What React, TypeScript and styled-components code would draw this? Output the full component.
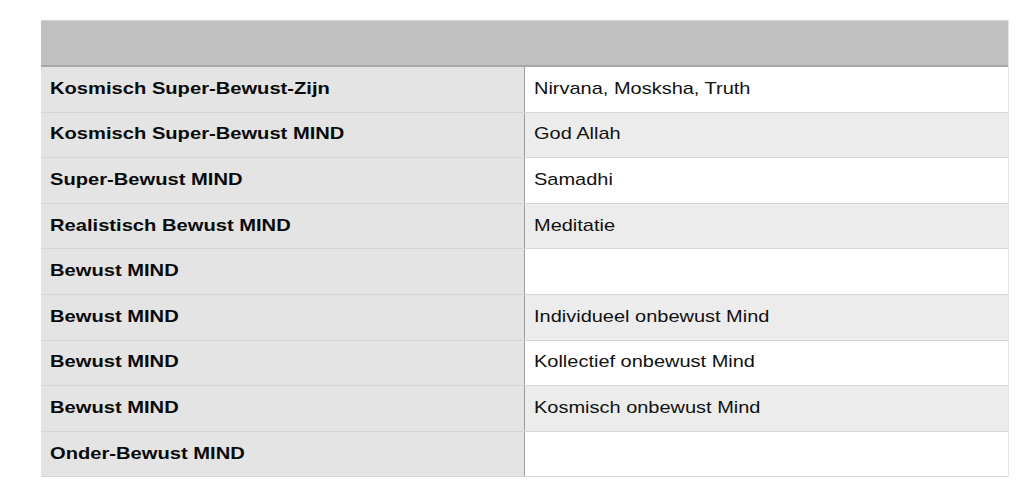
import React from "react";
import styled, { createGlobalStyle } from "styled-components";

const GlobalStyle = createGlobalStyle`
  html, body {
    margin: 0;
    padding: 0;
    background: #ffffff;
  }

  body {
    font-family: "Liberation Sans", Arial, Helvetica, sans-serif;
    color: #111111;
  }
`;

const Page = styled.div`
  padding: 20px 0 0 41px;
`;

const Sheet = styled.div`
  width: 968px;
  display: flex;
  flex-direction: column;
  border-right: 1px solid #e4e4e4;
  box-sizing: border-box;
`;

const HeaderBar = styled.div`
  height: 47px;
  background: #bfc0bf;
  border-top: 1px solid #d6d6d6;
  border-bottom: 2px solid #a6a7a6;
  box-sizing: border-box;
`;

const Row = styled.div`
  display: grid;
  grid-template-columns: 484px 1fr;
  height: 45.6px;
  box-sizing: border-box;
  border-bottom: 1px solid #d6d6d6;
`;

const LabelCell = styled.div`
  display: flex;
  align-items: center;
  padding: 0 0 1px 9px;
  background: #e3e4e3;
  border-right: 1px solid #9c9c9c;
  font-weight: 700;
  font-size: 17px;
  color: #0a0a0a;
`;

const ValueCell = styled.div<{ $shaded: boolean }>`
  display: flex;
  align-items: center;
  padding: 0 0 1px 9px;
  background: ${({ $shaded }) => ($shaded ? "#ececec" : "#ffffff")};
  font-size: 17px;
  color: #111111;
`;

// the source type is set a little wider than Arial, so stretch it
const Text = styled.span<{ $stretch: number }>`
  display: inline-block;
  white-space: nowrap;
  transform: scaleX(${({ $stretch }) => $stretch});
  transform-origin: left center;
`;

const rows: [string, string][] = [
  ["Kosmisch Super-Bewust-Zijn", "Nirvana, Mosksha, Truth"],
  ["Kosmisch Super-Bewust MIND", "God Allah"],
  ["Super-Bewust MIND", "Samadhi"],
  ["Realistisch Bewust MIND", "Meditatie"],
  ["Bewust MIND", ""],
  ["Bewust MIND", "Individueel onbewust Mind"],
  ["Bewust MIND", "Kollectief onbewust Mind"],
  ["Bewust MIND", "Kosmisch onbewust Mind"],
  ["Onder-Bewust MIND", ""],
];

function App() {
  return (
    <>
      <GlobalStyle />
      <Page>
        <Sheet>
          <HeaderBar />
          {rows.map(([label, value], i) => (
            <Row key={i}>
              <LabelCell>
                <Text $stretch={1.185}>{label}</Text>
              </LabelCell>
              <ValueCell $shaded={i % 2 === 1}>
                {value && <Text $stretch={1.175}>{value}</Text>}
              </ValueCell>
            </Row>
          ))}
        </Sheet>
      </Page>
    </>
  );
}

export default App;
